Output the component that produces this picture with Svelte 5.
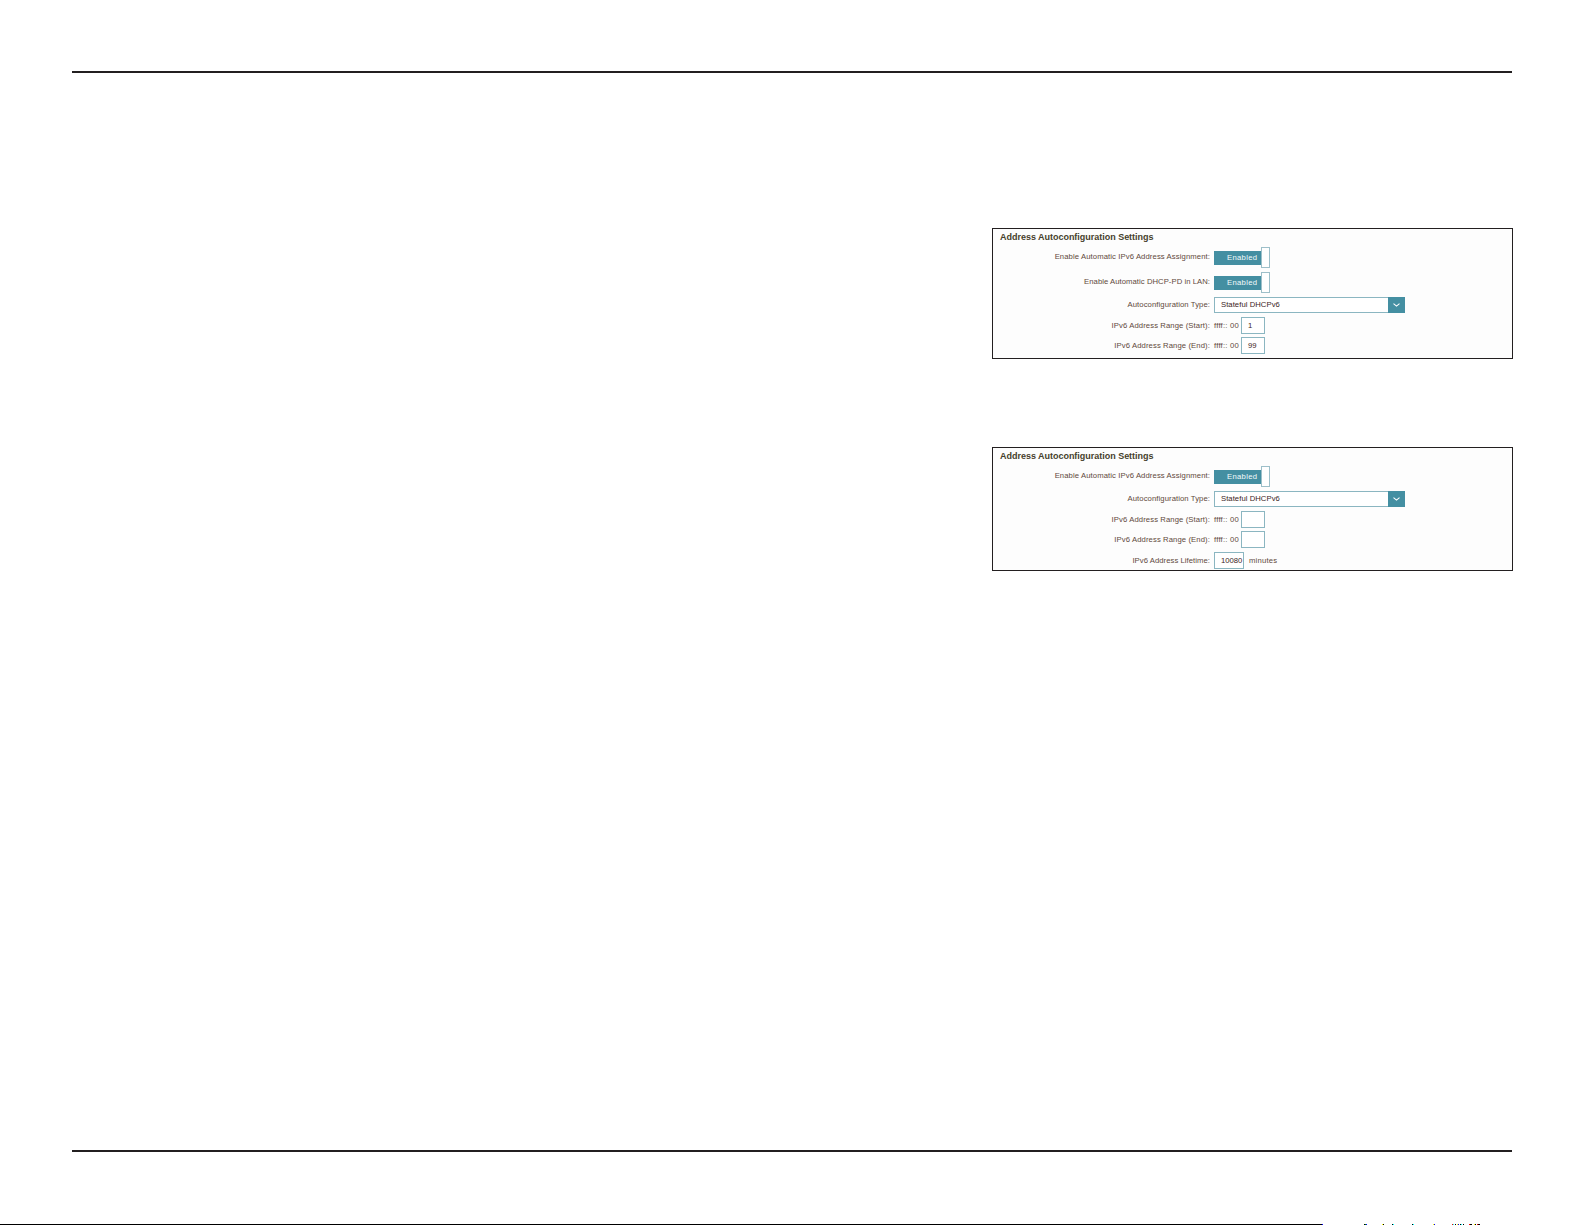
<script lang="ts">
  type Row = {
    label: string;
    kind: 'toggle' | 'select' | 'suffix' | 'lifetime';
    value: string;
    tracking: number;
  };

  type Panel = {
    title: string;
    rows: Row[];
  };

  const assignment: Row = {
    label: 'Enable Automatic IPv6 Address Assignment:',
    kind: 'toggle',
    value: 'Enabled',
    tracking: 0.1
  };

  const autoType: Row = {
    label: 'Autoconfiguration Type:',
    kind: 'select',
    value: 'Stateful DHCPv6',
    tracking: 0.08
  };

  const panels: Panel[] = [
    {
      title: 'Address Autoconfiguration Settings',
      rows: [
        assignment,
        { label: 'Enable Automatic DHCP-PD in LAN:', kind: 'toggle', value: 'Enabled', tracking: 0.05 },
        autoType,
        { label: 'IPv6 Address Range (Start):', kind: 'suffix', value: '1', tracking: 0.1 },
        { label: 'IPv6 Address Range (End):', kind: 'suffix', value: '99', tracking: 0.1 }
      ]
    },
    {
      title: 'Address Autoconfiguration Settings',
      rows: [
        assignment,
        autoType,
        { label: 'IPv6 Address Range (Start):', kind: 'suffix', value: '', tracking: 0.1 },
        { label: 'IPv6 Address Range (End):', kind: 'suffix', value: '', tracking: 0.1 },
        { label: 'IPv6 Address Lifetime:', kind: 'lifetime', value: '10080', tracking: 0.05 }
      ]
    }
  ];

  // marks on the lower page edge: x, width, colour
  const marks: [number, number, string][] = [
    [0, 1322, '#000'],
    [1322, 1, '#00f'],
    [1364, 1, '#000'],
    [1365, 1, '#080'],
    [1366, 1, '#00f'],
    [1382, 1, '#ff0'],
    [1383, 1, '#000'],
    [1392, 1, '#000'],
    [1393, 1, '#0ff'],
    [1412, 1, '#000'],
    [1413, 1, '#0ff'],
    [1433, 1, '#ff0'],
    [1434, 1, '#00f'],
    [1452, 1, '#f00'],
    [1453, 1, '#0ff'],
    [1455, 1, '#000'],
    [1457, 1, '#ff0'],
    [1458, 1, '#00f'],
    [1460, 1, '#000'],
    [1461, 1, '#0ff'],
    [1463, 1, '#000'],
    [1469, 1, '#f00'],
    [1470, 2, '#000'],
    [1474, 1, '#ff0'],
    [1475, 1, '#000'],
    [1477, 1, '#f00'],
    [1478, 2, '#000']
  ];
</script>

<main class="page">
  <div class="content">
    {#each panels as panel}
      <section class="panel">
        <h2>{panel.title}</h2>
        {#each panel.rows as row}
          <div class="row row--{row.kind}">
            <span class="label"><span style={`letter-spacing:${row.tracking}px`}>{row.label}</span></span>
            {#if row.kind === 'toggle'}
              <div class="toggle">
                <span class="toggle__track">{row.value}</span>
                <span class="toggle__knob"></span>
              </div>
            {:else if row.kind === 'select'}
              <div class="select">
                <span class="select__value">{row.value}</span>
                <span class="select__arrow">
                  <svg width="7" height="4" viewBox="0 0 7 4">
                    <path d="M0.5 0.6 L3.5 3.1 L6.5 0.6" fill="none" stroke="#fff" stroke-width="1.1" />
                  </svg>
                </span>
              </div>
            {:else if row.kind === 'suffix'}
              <span class="prefix">ffff:: 00</span>
              <span class="box">{row.value}</span>
            {:else}
              <span class="box box--wide">{row.value}</span>
              <span class="unit">minutes</span>
            {/if}
          </div>
        {/each}
      </section>
    {/each}
  </div>
  <svg class="edge" width="1585" height="1" viewBox="0 0 1585 1" shape-rendering="crispEdges">
    {#each marks as [x, width, fill]}
      <rect {x} y="0" {width} height="1" {fill} />
    {/each}
  </svg>
</main>

<style>
  :global(body) {
    margin: 0;
    background: #fff;
  }

  .page {
    display: flex;
    flex-direction: column;
    justify-content: space-between;
    box-sizing: border-box;
    width: 1585px;
    height: 1225px;
    padding-top: 71px;
    overflow: hidden;
    font-family: "Liberation Sans", Arial, sans-serif;
  }

  .content {
    display: flex;
    flex-direction: column;
    align-items: flex-end;
    gap: 88px;
    box-sizing: border-box;
    width: 1440px;
    height: 1081px;
    margin-left: 72px;
    padding-top: 155px;
    border-top: 2px solid #231f20;
    border-bottom: 2px solid #231f20;
  }

  .panel {
    box-sizing: border-box;
    width: 521px;
    height: 131px;
    margin-right: -1px;
    border: 1px solid #231f20;
    background: #fdfdfd;
  }

  .panel + .panel {
    height: 124px;
  }

  h2 {
    height: 18px;
    margin: 0;
    padding-left: 7px;
    font-size: 9px;
    line-height: 17px;
    letter-spacing: -0.02px;
    color: #463f2c;
  }

  .row {
    display: flex;
    align-items: flex-start;
    height: 20px;
    font-size: 7.7px;
    line-height: 17px;
    white-space: nowrap;
    color: #5f493c;
  }

  .row--toggle {
    height: 25px;
    line-height: 20px;
  }

  .row--select {
    line-height: 16px;
  }

  .row--lifetime {
    padding-top: 1px;
  }

  .label {
    width: 217px;
    margin-right: 4px;
    text-align: right;
  }

  .toggle {
    display: flex;
    align-items: center;
    height: 21px;
  }

  .toggle__track {
    box-sizing: border-box;
    width: 47px;
    height: 14px;
    padding-left: 13px;
    background: #448fa2;
    color: #f2fbfc;
    line-height: 13px;
    letter-spacing: 0.3px;
  }

  .toggle__knob {
    box-sizing: border-box;
    width: 9px;
    height: 21px;
    border: 1px solid #9dbfc9;
    background: #fff;
  }

  .select {
    display: flex;
    box-sizing: border-box;
    width: 191px;
    height: 16px;
    border: 1px solid #8bb6c1;
    background: #fff;
  }

  .select__value {
    flex: 1;
    padding-left: 6px;
    line-height: 14px;
    letter-spacing: 0.05px;
    color: #3c2424;
  }

  .select__arrow {
    display: grid;
    place-items: center;
    width: 17px;
    margin: -1px;
    background: #448fa2;
  }

  .prefix {
    width: 27px;
    letter-spacing: 0.2px;
    font-variant-ligatures: none;
  }

  .box {
    box-sizing: border-box;
    width: 24px;
    height: 17px;
    padding-left: 6px;
    border: 1px solid #8bb6c1;
    background: #fff;
    line-height: 15px;
    color: #3c2424;
  }

  .box--wide {
    width: 30px;
  }

  .unit {
    margin-left: 5px;
    letter-spacing: 0.2px;
  }

  .edge {
    display: block;
  }
</style>
